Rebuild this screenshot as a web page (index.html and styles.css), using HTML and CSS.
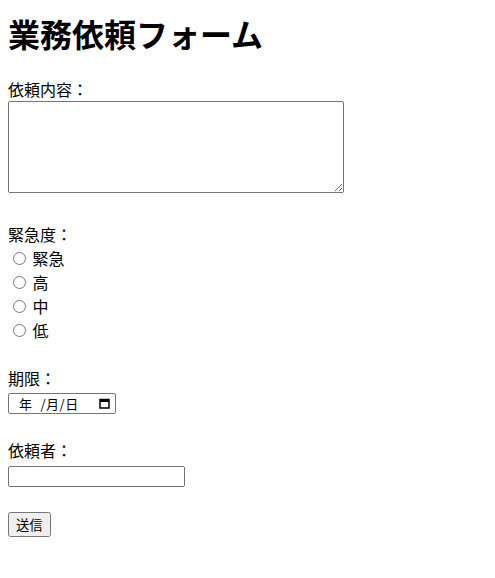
FILE: index.html
```html
<!DOCTYPE html>
<html lang="ja">
<head>
<meta charset="utf-8">
<title>業務依頼フォーム</title>
<link rel="stylesheet" href="styles.css">
</head>
<body>
<h1 class="title">業務依頼フォーム</h1>
<form class="form">
<label for="content">依頼内容：</label><br>
<textarea id="content" class="content" rows="5" cols="40"></textarea><br><br>
<label>緊急度：</label><br>
<input type="radio" name="urgency" value="urgent"> 緊急<br>
<input type="radio" name="urgency" value="high"> 高<br>
<input type="radio" name="urgency" value="mid"> 中<br>
<input type="radio" name="urgency" value="low"> 低<br><br>
<label>期限：</label><br>
<span class="date" role="textbox" aria-label="期限"><span class="date-text"><span class="yr">年</span>/月/日</span><svg class="cal" width="11" height="11" viewBox="0 0 11 11" aria-hidden="true"><rect x="1" y="1.5" width="9" height="8.5" fill="none" stroke="#000" stroke-width="1.5"/><rect x="1" y="1" width="9" height="3" fill="#000"/></svg></span><br><br>
<label for="requester">依頼者：</label><br>
<input type="text" id="requester" class="text"><br><br>
<button type="submit" class="submit">送信</button>
</form>
</body>
</html>
```

FILE: styles.css
```css
body {
  margin: 8px;
  font-family: "Noto Sans CJK JP", sans-serif;
  font-size: 16px;
  color: #000;
  background: #fff;
}
.title {
  font-size: 32px;
  margin: 2px 0 21px;
}
.content {
  width: 336px;
  height: 92px;
  box-sizing: border-box;
}
.date {
  display: inline-flex;
  align-items: center;
  justify-content: space-between;
  box-sizing: border-box;
  width: 108px;
  height: 21px;
  padding: 0 5px 0 10px;
  border: 1px solid #767676;
  border-radius: 2px;
  font-family: "Noto Sans CJK JP", sans-serif;
  font-size: 13px;
  line-height: 1;
  vertical-align: bottom;
  margin-top: 1px;
}
.date-text {
  white-space: pre;
  letter-spacing: 0.5px;
}
.yr {
  margin-right: 8px;
}
.cal {
  display: block;
}
.text {
  box-sizing: border-box;
  width: 177px;
  height: 21px;
}
.submit {
  font-family: "Noto Sans CJK JP", sans-serif;
  font-size: 13.33px;
}
```
